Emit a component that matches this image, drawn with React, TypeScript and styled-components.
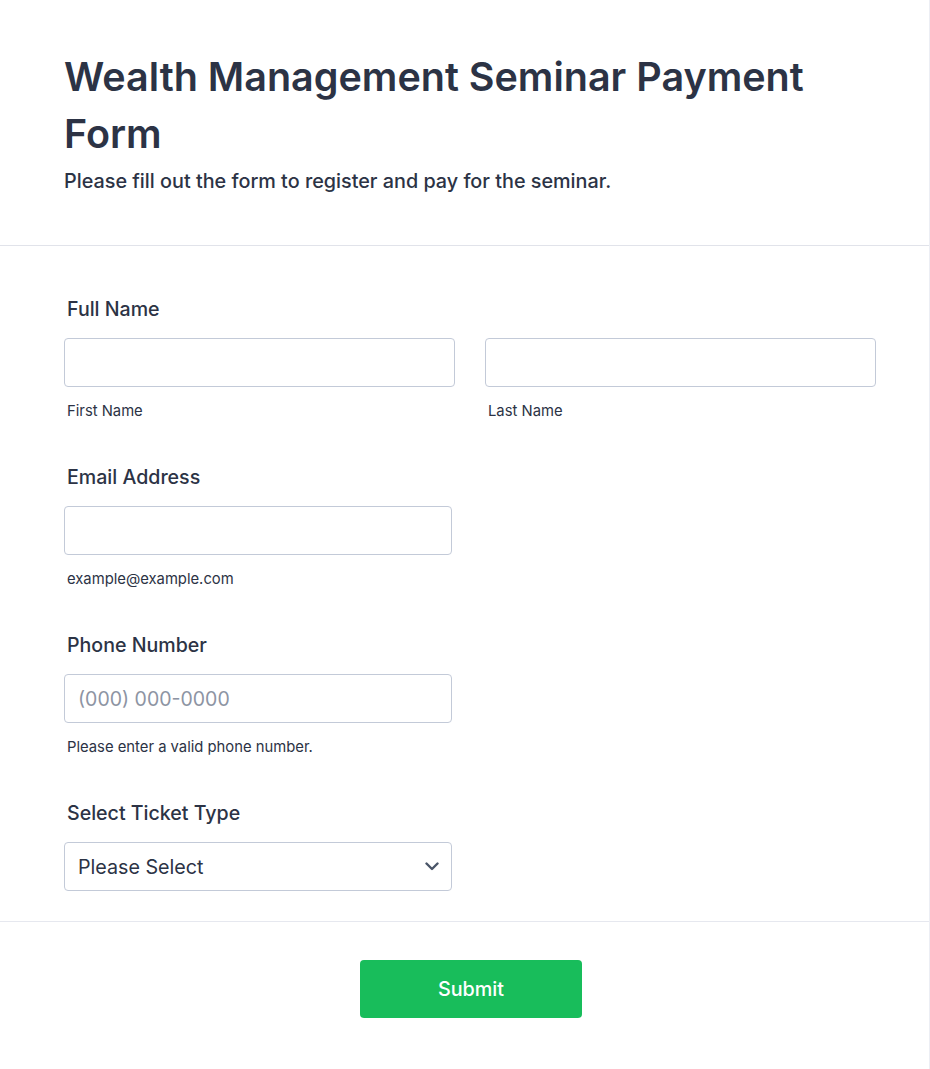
import React from "react";
import styled, { createGlobalStyle } from "styled-components";

const Global = createGlobalStyle`
  html, body { margin: 0; padding: 0; background: #eceef4; }
  body { font-family: Inter, "Noto Sans", sans-serif; color: #2c3345; }
  * { box-sizing: border-box; }
`;

const Card = styled.div`
  width: 929px;
  background: #ffffff;
  min-height: 1069px;
  display: flex;
  flex-direction: column;
`;

const Header = styled.header`
  padding: 49px 64px 50px 64px;
  border-bottom: 1px solid #e1e3ea;
`;

const Title = styled.h1`
  margin: 0;
  font-size: 39.5px;
  line-height: 57px;
  font-weight: 600;
  color: #2c3345;
`;

const Subtitle = styled.p`
  margin: 5px 0 0 0;
  font-size: 19.8px;
  line-height: 27px;
  font-weight: 500;
  color: #2c3345;
`;

const FormBody = styled.div`
  padding: 50px 51px 30px 64px;
  display: flex;
  flex-direction: column;
  gap: 42px;
  border-bottom: 1px solid #e6e8ef;
`;

const Field = styled.div`
  display: flex;
  flex-direction: column;
`;

const Label = styled.label`
  font-size: 19.6px;
  line-height: 27px;
  font-weight: 500;
  padding-left: 3px;
  margin-bottom: 15px;
  color: #2c3345;
`;

const Row = styled.div`
  display: grid;
  grid-template-columns: 391px 391px;
  gap: 30px;
`;

const Col = styled.div`
  display: flex;
  flex-direction: column;
`;

const Input = styled.input<{ $w?: number }>`
  width: ${(p) => (p.$w ? `${p.$w}px` : "100%")};
  height: 49px;
  border: 1px solid #c3cad8;
  border-radius: 4px;
  padding: 0 13px;
  font-family: Inter, "Noto Sans", sans-serif;
  font-size: 19.5px;
  color: #2c3345;
  background: #fff;
  outline: none;
  &::placeholder { color: #8d94a3; }
`;

const Sub = styled.span`
  margin-top: 14px;
  padding-left: 3px;
  font-size: 14.8px;
  line-height: 21px;
  color: #2c3345;
`;

const SelectBox = styled.div`
  width: 388px;
  height: 49px;
  border: 1px solid #c3cad8;
  border-radius: 4px;
  padding: 0 12px 0 13px;
  display: flex;
  align-items: center;
  justify-content: space-between;
  font-size: 19.7px;
  color: #2c3345;
  background: #fff;
`;

const Footer = styled.div`
  flex: 1;
  background: #ffffff;
  padding: 38px 51px 51px 64px;
  display: flex;
  justify-content: center;
  align-items: flex-start;
`;

const Button = styled.button`
  width: 222px;
  height: 58px;
  border: none;
  border-radius: 4px;
  background: #18bd5b;
  color: #fff;
  font-family: Inter, "Noto Sans", sans-serif;
  font-size: 19.8px;
  font-weight: 500;
  padding-top: 1px;
  cursor: pointer;
`;

const Chevron = () => (
  <svg width="14" height="9" viewBox="0 0 14 9" fill="none">
    <path d="M1.5 1.5 L7 7 L12.5 1.5" stroke="#4a5568" strokeWidth="2.4" strokeLinecap="round" strokeLinejoin="round" />
  </svg>
);

export default function App() {
  return (
    <>
      <Global />
      <Card>
        <Header>
          <Title>Wealth Management Seminar Payment Form</Title>
          <Subtitle>Please fill out the form to register and pay for the seminar.</Subtitle>
        </Header>
        <FormBody>
          <Field>
            <Label>Full Name</Label>
            <Row>
              <Col>
                <Input />
                <Sub>First Name</Sub>
              </Col>
              <Col>
                <Input />
                <Sub>Last Name</Sub>
              </Col>
            </Row>
          </Field>
          <Field>
            <Label>Email Address</Label>
            <Input $w={388} />
            <Sub>example@example.com</Sub>
          </Field>
          <Field>
            <Label>Phone Number</Label>
            <Input $w={388} placeholder="(000) 000-0000" />
            <Sub>Please enter a valid phone number.</Sub>
          </Field>
          <Field>
            <Label>Select Ticket Type</Label>
            <SelectBox>
              <span>Please Select</span>
              <Chevron />
            </SelectBox>
          </Field>
        </FormBody>
        <Footer>
          <Button>Submit</Button>
        </Footer>
      </Card>
    </>
  );
}
